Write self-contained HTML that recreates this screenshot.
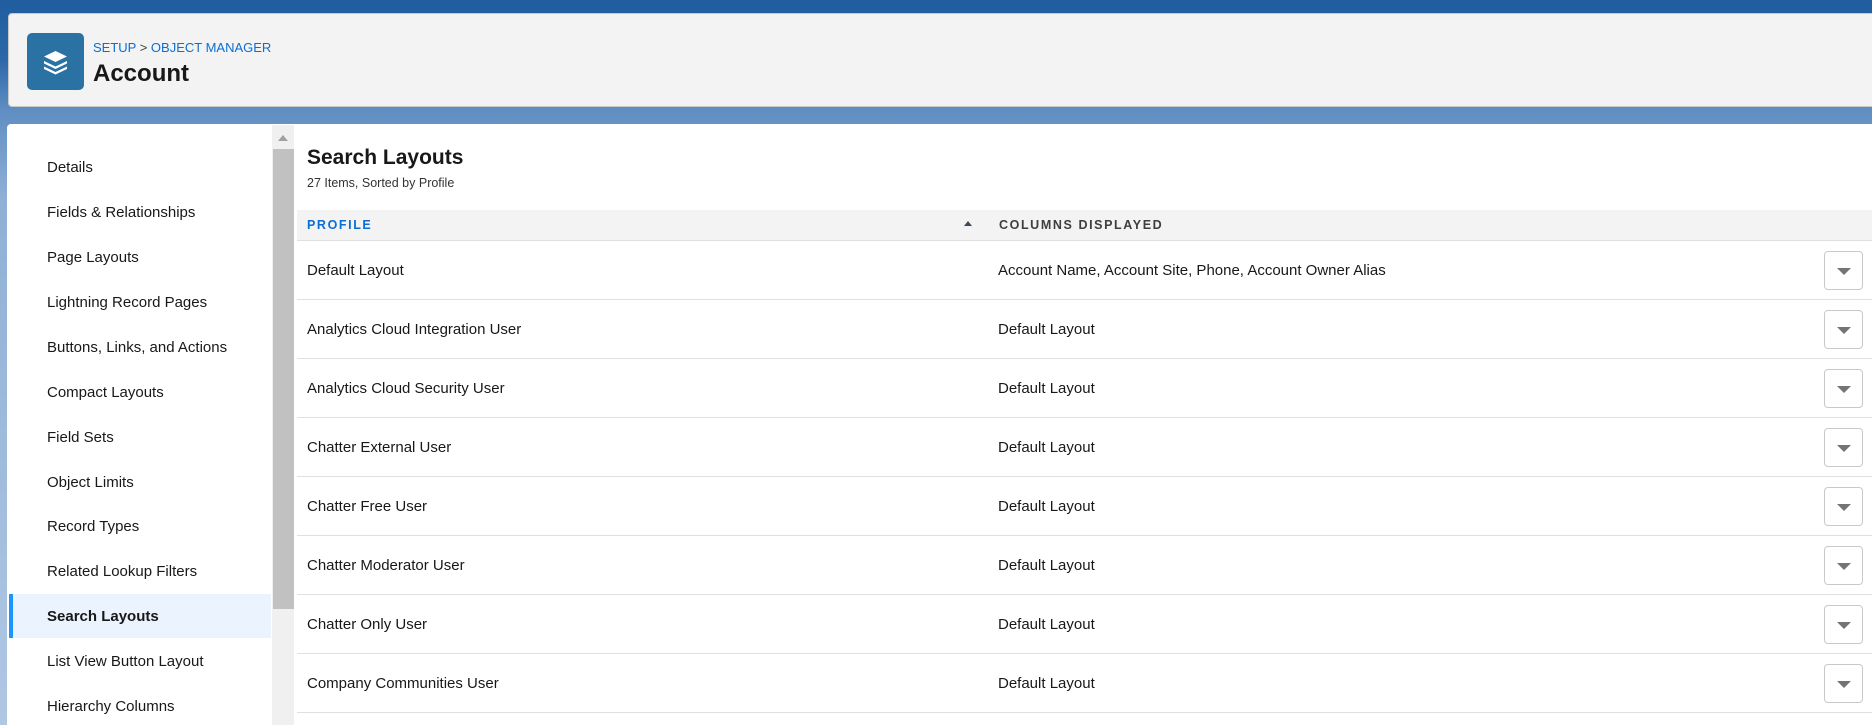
<!DOCTYPE html>
<html><head><meta charset="utf-8"><style>
*{margin:0;padding:0;box-sizing:border-box}
html{background:#b0c7e3;overflow:hidden}
body{width:1872px;height:725px;overflow:hidden;position:relative;font-family:"Liberation Sans",sans-serif;color:#181818;
background:linear-gradient(180deg,#1f5d9f 0px,#2c68a8 60px,#5f8ec2 110px,#8fb0d6 200px,#b0c7e3 725px);}
.hdr{position:absolute;left:8px;top:13px;width:1880px;height:94px;background:#f3f3f3;border-radius:4px;border:1px solid #c9c9c9}
.ico{position:absolute;left:27px;top:33px;width:57px;height:57px;background:#2a72a3;border-radius:5px}
.bc{position:absolute;left:93px;top:40px;font-size:13px;color:#0b6ed3}
.bc span{color:#444}
.ttl{position:absolute;left:93px;top:60px;font-size:24px;font-weight:bold}
.card{position:absolute;left:7px;top:124px;width:1880px;height:601px;background:#fff;border-radius:4px 0 0 0}
.si{position:absolute;left:47px;font-size:15px;height:45px;line-height:45px}
.sel{position:absolute;left:9px;top:594px;width:262px;height:44px;background:#eaf3fe;border-left:4px solid #1b96ff}
.sb{position:absolute;left:272px;top:125px;width:22px;height:600px;background:#f0f0f0}
.thumb{position:absolute;left:273px;top:149px;width:21px;height:460px;background:#c1c1c1}
.h1{position:absolute;left:307px;top:146px;font-size:21px;font-weight:bold}
.sub{position:absolute;left:307px;top:176px;font-size:12.5px;color:#333}
.th{position:absolute;left:297px;top:210px;width:1580px;height:31px;background:#f3f3f3;border-bottom:1px solid #e0e0e0}
.thl{position:absolute;top:218px;font-size:12.5px;font-weight:bold;letter-spacing:1.6px}
.row{position:absolute;left:297px;width:1580px;height:59px;border-bottom:1px solid #e0e0e0}
.c1{position:absolute;left:10px;top:21px;font-size:15px}
.c2{position:absolute;left:701px;top:21px;font-size:15px}
.btn{position:absolute;left:1527px;top:10px;width:39px;height:39px;border:1px solid #c9c9c9;border-radius:4px;background:#fff}
.btn:after{content:"";position:absolute;left:12px;top:16px;border-left:7px solid transparent;border-right:7px solid transparent;border-top:7px solid #747474}
</style></head><body>
<div class="hdr"></div>
<div class="ico"><svg width="57" height="57" viewBox="0 0 57 57"><g fill="#fff"><path d="M28.5 18 L40 23.5 L28.5 29 L17 23.5Z"/><path d="M17 28 L28.5 33.5 L40 28 L40 30.5 L28.5 36 L17 30.5Z"/><path d="M17 33.5 L28.5 39 L40 33.5 L40 36 L28.5 41.5 L17 36Z"/></g></svg></div>
<div class="bc">SETUP <span>&gt;</span> OBJECT MANAGER</div>
<div class="ttl">Account</div>
<div class="card"></div>
<div class="sel"></div>
<div class="si" style="top:145px">Details</div>
<div class="si" style="top:190px">Fields &amp; Relationships</div>
<div class="si" style="top:235px">Page Layouts</div>
<div class="si" style="top:280px">Lightning Record Pages</div>
<div class="si" style="top:325px">Buttons, Links, and Actions</div>
<div class="si" style="top:370px">Compact Layouts</div>
<div class="si" style="top:415px">Field Sets</div>
<div class="si" style="top:460px">Object Limits</div>
<div class="si" style="top:504px">Record Types</div>
<div class="si" style="top:549px">Related Lookup Filters</div>
<div class="si" style="top:594px;font-weight:bold">Search Layouts</div>
<div class="si" style="top:639px">List View Button Layout</div>
<div class="si" style="top:684px">Hierarchy Columns</div>
<div class="sb"></div><div class="thumb"></div>
<div style="position:absolute;left:278px;top:135px;border-left:5px solid transparent;border-right:5px solid transparent;border-bottom:6px solid #a0a0a0"></div>
<div class="h1">Search Layouts</div>
<div class="sub">27 Items, Sorted by Profile</div>
<div class="th"></div>
<div class="thl" style="left:307px;color:#0b6ed3">PROFILE</div>
<div style="position:absolute;left:964px;top:221px;border-left:4px solid transparent;border-right:4px solid transparent;border-bottom:5px solid #3e4a5a"></div>
<div class="thl" style="left:999px;color:#3e3e3c">COLUMNS DISPLAYED</div>
<div class="row" style="top:241px"><div class="c1">Default Layout</div><div class="c2">Account Name, Account Site, Phone, Account Owner Alias</div><div class="btn"></div></div>
<div class="row" style="top:300px"><div class="c1">Analytics Cloud Integration User</div><div class="c2">Default Layout</div><div class="btn"></div></div>
<div class="row" style="top:359px"><div class="c1">Analytics Cloud Security User</div><div class="c2">Default Layout</div><div class="btn"></div></div>
<div class="row" style="top:418px"><div class="c1">Chatter External User</div><div class="c2">Default Layout</div><div class="btn"></div></div>
<div class="row" style="top:477px"><div class="c1">Chatter Free User</div><div class="c2">Default Layout</div><div class="btn"></div></div>
<div class="row" style="top:536px"><div class="c1">Chatter Moderator User</div><div class="c2">Default Layout</div><div class="btn"></div></div>
<div class="row" style="top:595px"><div class="c1">Chatter Only User</div><div class="c2">Default Layout</div><div class="btn"></div></div>
<div class="row" style="top:654px"><div class="c1">Company Communities User</div><div class="c2">Default Layout</div><div class="btn"></div></div>
</body></html>
